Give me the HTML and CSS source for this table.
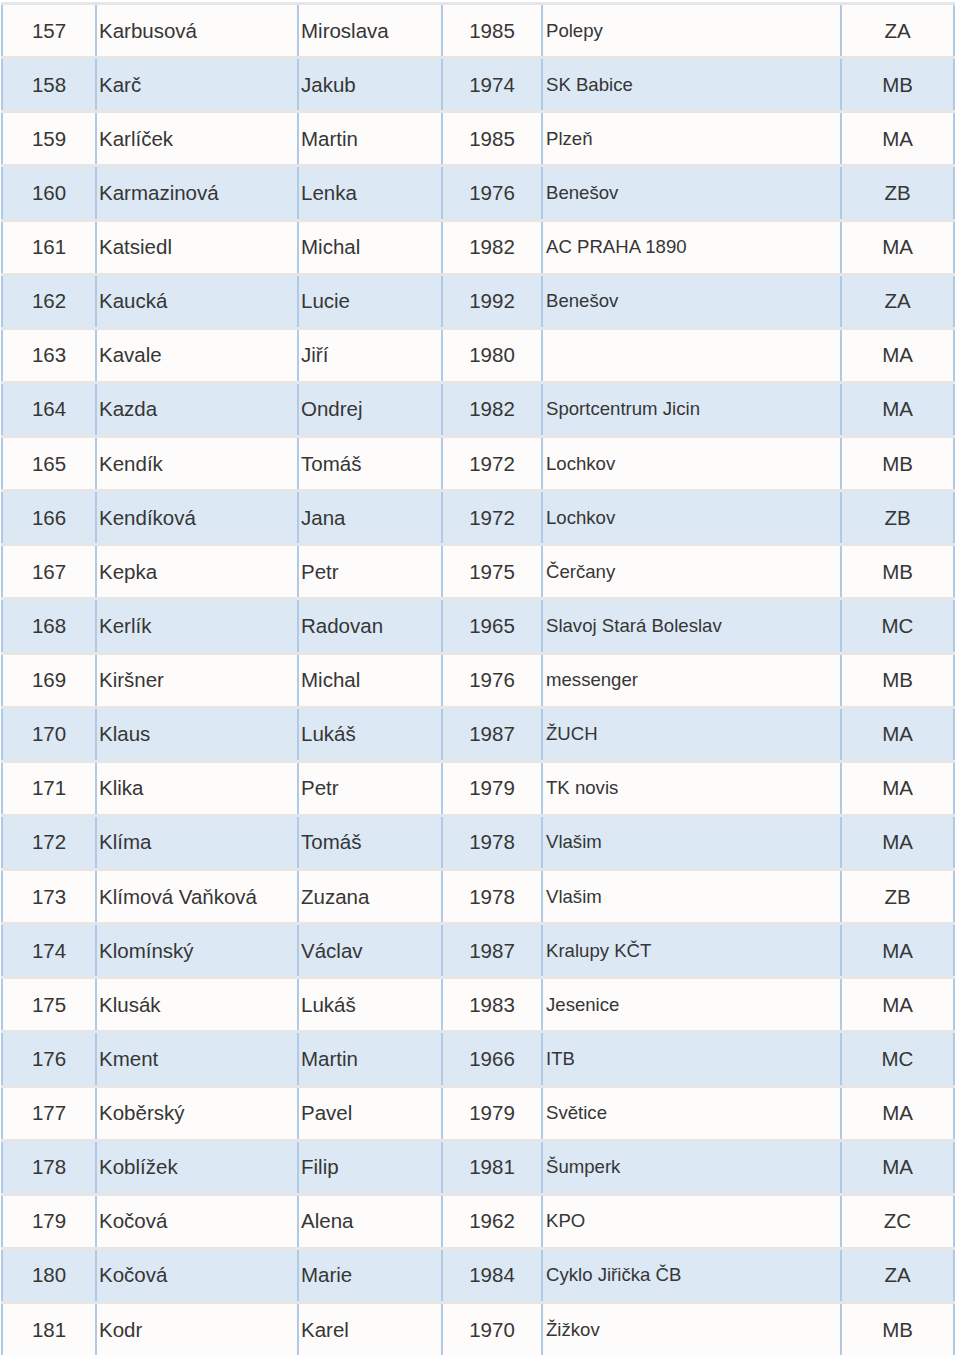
FILE: index.html
```html
<!DOCTYPE html>
<html lang="cs">
<head>
<meta charset="utf-8">
<title>Seznam</title>
<link rel="stylesheet" href="styles.css">
</head>
<body>
<div class="table">
  <div class="row odd"><div class="c num">157</div><div class="c">Karbusová</div><div class="c">Miroslava</div><div class="c num">1985</div><div class="c club">Polepy</div><div class="c num last">ZA</div></div>
  <div class="row even"><div class="c num">158</div><div class="c">Karč</div><div class="c">Jakub</div><div class="c num">1974</div><div class="c club">SK Babice</div><div class="c num last">MB</div></div>
  <div class="row odd"><div class="c num">159</div><div class="c">Karlíček</div><div class="c">Martin</div><div class="c num">1985</div><div class="c club">Plzeň</div><div class="c num last">MA</div></div>
  <div class="row even"><div class="c num">160</div><div class="c">Karmazinová</div><div class="c">Lenka</div><div class="c num">1976</div><div class="c club">Benešov</div><div class="c num last">ZB</div></div>
  <div class="row odd"><div class="c num">161</div><div class="c">Katsiedl</div><div class="c">Michal</div><div class="c num">1982</div><div class="c club">AC PRAHA 1890</div><div class="c num last">MA</div></div>
  <div class="row even"><div class="c num">162</div><div class="c">Kaucká</div><div class="c">Lucie</div><div class="c num">1992</div><div class="c club">Benešov</div><div class="c num last">ZA</div></div>
  <div class="row odd"><div class="c num">163</div><div class="c">Kavale</div><div class="c">Jiří</div><div class="c num">1980</div><div class="c club"></div><div class="c num last">MA</div></div>
  <div class="row even"><div class="c num">164</div><div class="c">Kazda</div><div class="c">Ondrej</div><div class="c num">1982</div><div class="c club">Sportcentrum Jicin</div><div class="c num last">MA</div></div>
  <div class="row odd"><div class="c num">165</div><div class="c">Kendík</div><div class="c">Tomáš</div><div class="c num">1972</div><div class="c club">Lochkov</div><div class="c num last">MB</div></div>
  <div class="row even"><div class="c num">166</div><div class="c">Kendíková</div><div class="c">Jana</div><div class="c num">1972</div><div class="c club">Lochkov</div><div class="c num last">ZB</div></div>
  <div class="row odd"><div class="c num">167</div><div class="c">Kepka</div><div class="c">Petr</div><div class="c num">1975</div><div class="c club">Čerčany</div><div class="c num last">MB</div></div>
  <div class="row even"><div class="c num">168</div><div class="c">Kerlík</div><div class="c">Radovan</div><div class="c num">1965</div><div class="c club">Slavoj Stará Boleslav</div><div class="c num last">MC</div></div>
  <div class="row odd"><div class="c num">169</div><div class="c">Kiršner</div><div class="c">Michal</div><div class="c num">1976</div><div class="c club">messenger</div><div class="c num last">MB</div></div>
  <div class="row even"><div class="c num">170</div><div class="c">Klaus</div><div class="c">Lukáš</div><div class="c num">1987</div><div class="c club">ŽUCH</div><div class="c num last">MA</div></div>
  <div class="row odd"><div class="c num">171</div><div class="c">Klika</div><div class="c">Petr</div><div class="c num">1979</div><div class="c club">TK novis</div><div class="c num last">MA</div></div>
  <div class="row even"><div class="c num">172</div><div class="c">Klíma</div><div class="c">Tomáš</div><div class="c num">1978</div><div class="c club">Vlašim</div><div class="c num last">MA</div></div>
  <div class="row odd"><div class="c num">173</div><div class="c">Klímová Vaňková</div><div class="c">Zuzana</div><div class="c num">1978</div><div class="c club">Vlašim</div><div class="c num last">ZB</div></div>
  <div class="row even"><div class="c num">174</div><div class="c">Klomínský</div><div class="c">Václav</div><div class="c num">1987</div><div class="c club">Kralupy KČT</div><div class="c num last">MA</div></div>
  <div class="row odd"><div class="c num">175</div><div class="c">Klusák</div><div class="c">Lukáš</div><div class="c num">1983</div><div class="c club">Jesenice</div><div class="c num last">MA</div></div>
  <div class="row even"><div class="c num">176</div><div class="c">Kment</div><div class="c">Martin</div><div class="c num">1966</div><div class="c club">ITB</div><div class="c num last">MC</div></div>
  <div class="row odd"><div class="c num">177</div><div class="c">Koběrský</div><div class="c">Pavel</div><div class="c num">1979</div><div class="c club">Světice</div><div class="c num last">MA</div></div>
  <div class="row even"><div class="c num">178</div><div class="c">Koblížek</div><div class="c">Filip</div><div class="c num">1981</div><div class="c club">Šumperk</div><div class="c num last">MA</div></div>
  <div class="row odd"><div class="c num">179</div><div class="c">Kočová</div><div class="c">Alena</div><div class="c num">1962</div><div class="c club">KPO</div><div class="c num last">ZC</div></div>
  <div class="row even"><div class="c num">180</div><div class="c">Kočová</div><div class="c">Marie</div><div class="c num">1984</div><div class="c club">Cyklo Jiřička ČB</div><div class="c num last">ZA</div></div>
  <div class="row odd"><div class="c num">181</div><div class="c">Kodr</div><div class="c">Karel</div><div class="c num">1970</div><div class="c club">Žižkov</div><div class="c num last">MB</div></div>
</div>
</body>
</html>
```

FILE: styles.css
```css
html, body {
  margin: 0;
  padding: 0;
  background: #ffffff;
}

body {
  font-family: "Liberation Sans", Arial, sans-serif;
  color: #363636;
}

.table {
  display: flex;
  flex-direction: column;
  margin: 2px 0 0 1px;
  width: 954px;
}

.row {
  display: grid;
  grid-template-columns: 94px 202px 144px 100px 299px 115px;
  height: 54.125px;
  box-sizing: border-box;
  border-top: 3px solid #e6e6e6;
}

.row.odd {
  background: #fdfcfb;
}

.row.even {
  background: #dce9f5;
}

.c {
  display: flex;
  align-items: center;
  border-left: 2px solid #b0c9e4;
  padding-left: 2px;
  font-size: 20.5px;
  white-space: nowrap;
  overflow: hidden;
}

.c.num {
  justify-content: center;
  padding-left: 0;
}

.c.club {
  padding-left: 3px;
  font-size: 18.6px;
}

.c.last {
  border-right: 2px solid #b0c9e4;
}
```
